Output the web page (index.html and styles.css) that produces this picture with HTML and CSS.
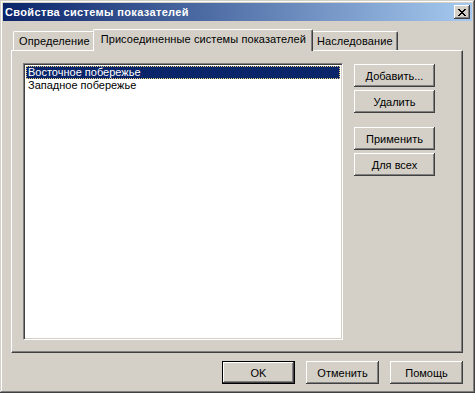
FILE: index.html
```html
<!DOCTYPE html>
<html lang="ru">
<head>
    <meta charset="UTF-8">
    <title>Свойства системы показателей</title>
    <link rel="stylesheet" href="styles.css">
</head>
<body>
    <div class="window">
        <div class="titlebar">
            <span class="title">Свойства системы показателей</span>
            <button class="close-btn" title="Закрыть">
                <svg width="8" height="7" viewBox="0 0 8 7" shape-rendering="crispEdges">
                    <path d="M0 0h2v1h-2zM6 0h2v1h-2zM1 1h2v1h-2zM5 1h2v1h-2zM2 2h4v1h-4zM3 3h2v1h-2zM2 4h4v1h-4zM1 5h2v1h-2zM5 5h2v1h-2zM0 6h2v1h-2zM6 6h2v1h-2z" fill="#000"/>
                </svg>
            </button>
        </div>

        <div class="dialog-body">
            <div class="tabs">
                <div class="tab">Определение</div>
                <div class="tab active">Присоединенные системы показателей</div>
                <div class="tab">Наследование</div>
            </div>

            <div class="panel">
                <ul class="listbox">
                    <li class="selected">Восточное побережье</li>
                    <li>Западное побережье</li>
                </ul>
                <div class="side-buttons">
                    <button class="btn">Добавить...</button>
                    <button class="btn">Удалить</button>
                    <button class="btn group-start">Применить</button>
                    <button class="btn">Для всех</button>
                </div>
            </div>

            <div class="footer">
                <button class="btn dlg-btn default">OK</button>
                <button class="btn dlg-btn">Отменить</button>
                <button class="btn dlg-btn">Помощь</button>
            </div>
        </div>
    </div>
</body>
</html>
```

FILE: styles.css
```css
body {
    margin: 0;
    padding: 0;
    font-family: "Liberation Sans", Arial, sans-serif;
    font-size: 11px;
    color: #000;
}

.window {
    width: 475px;
    height: 393px;
    box-sizing: border-box;
    padding: 3px;
    background-color: #d4d0c8; /* face */
    display: flex;
    flex-direction: column;
    box-shadow: inset -1px -1px #404040, inset 1px 1px #d4d0c8,
                inset -2px -2px #808080, inset 2px 2px #ffffff;
}

.titlebar {
    height: 18px;
    display: flex;
    align-items: center;
    justify-content: space-between;
    background: linear-gradient(to right, #0a246a, #a6caf0);
    padding: 0 2px 0 2px;
}

.title {
    color: #fff;
    font-weight: bold;
    font-size: 11px;
    letter-spacing: 0.35px;
}

.close-btn {
    width: 16px;
    height: 14px;
    padding: 0;
    border: none;
    background-color: #d4d0c8;
    display: flex;
    align-items: center;
    justify-content: center;
    box-shadow: inset -1px -1px #404040, inset 1px 1px #ffffff,
                inset -2px -2px #808080;
}

.dialog-body {
    flex: 1;
    display: flex;
    flex-direction: column;
    padding: 8px 9px 6px 8px;
}

.tabs {
    height: 21px;
    display: flex;
    align-items: flex-end;
    padding-left: 2px;
}

.tab {
    height: 19px;
    box-sizing: border-box;
    padding: 3px 4px 0 5px;
    border-top: 1px solid #fff;
    border-left: 1px solid #fff;
    border-right: 1px solid #404040;
    box-shadow: inset -1px 0 #808080;
    border-radius: 2px 2px 0 0;
    white-space: nowrap;
    letter-spacing: 0.1px;
}

.tab.active {
    position: relative;
    z-index: 1;
    height: 22px;
    margin: 0 -2px -1px -2px;
    padding: 3px 6px 0 7px;
    background-color: #d4d0c8;
}

.panel {
    flex: 1;
    display: flex;
    padding: 12px 0 12px 11px;
    border-top: 1px solid #fff;
    border-left: 1px solid #fff;
    border-right: 1px solid #404040;
    border-bottom: 1px solid #404040;
    box-shadow: inset -1px -1px #808080;
}

.listbox {
    flex: 1;
    list-style: none;
    margin: 0;
    padding: 2px;
    background-color: #fff;
    border-top: 1px solid #808080;
    border-left: 1px solid #808080;
    border-right: 1px solid #fff;
    border-bottom: 1px solid #fff;
    box-shadow: inset 1px 1px #404040, inset -1px -1px #d4d0c8;
}

.listbox li {
    height: 13px;
    line-height: 13px;
    padding-left: 2px;
    white-space: nowrap;
}

.listbox li.selected {
    background-color: #0a246a;
    color: #fff;
    outline: 1px dotted #e8d078;
    outline-offset: -1px;
}

.side-buttons {
    width: 81px;
    margin: 1px 27px 0 11px;
    display: flex;
    flex-direction: column;
    gap: 3px;
}

.side-buttons .group-start {
    margin-top: 11px;
}

.btn {
    height: 23px;
    padding: 0;
    border: none;
    background-color: #d4d0c8;
    font-family: "Liberation Sans", Arial, sans-serif;
    font-size: 11px;
    color: #000;
    box-shadow: inset -1px -1px #404040, inset 1px 1px #ffffff,
                inset -2px -2px #808080;
}

.footer {
    margin-top: 8px;
    display: flex;
    justify-content: flex-end;
    gap: 11px;
}

.dlg-btn {
    width: 73px;
}

.btn.default {
    box-shadow: inset 0 0 0 1px #000, inset -2px -2px #404040,
                inset 2px 2px #ffffff, inset -3px -3px #808080;
}
```
